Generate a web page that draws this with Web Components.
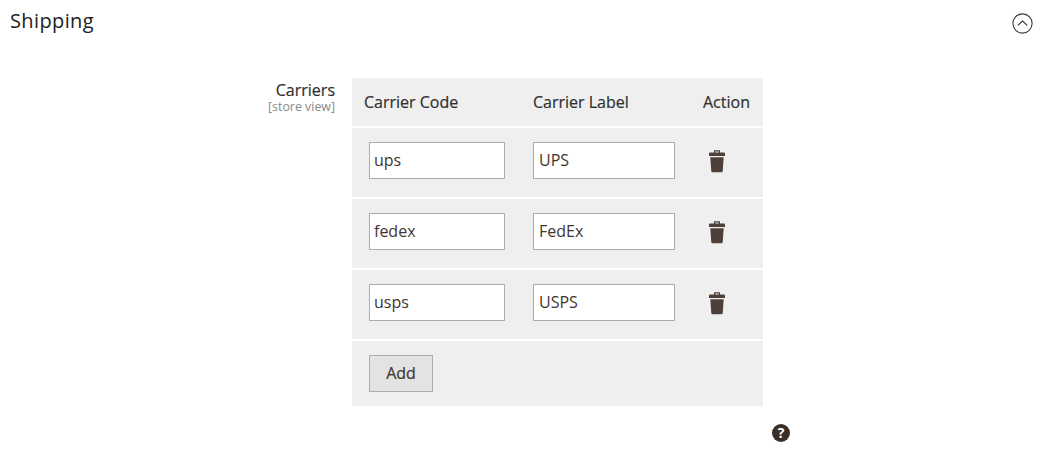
<!DOCTYPE html>
<html>
<head>
<meta charset="utf-8">
<title>Shipping</title>
<style>
html, body { margin: 0; background: #fff; }
body { font-family: "Open Sans", "Liberation Sans", sans-serif; color: #303030; }
</style>
</head>
<body>
<shipping-section title-text="Shipping">
  <carriers-field label="Carriers" scope="[store view]">
    <carrier-row code="ups" name="UPS"></carrier-row>
    <carrier-row code="fedex" name="FedEx"></carrier-row>
    <carrier-row code="usps" name="USPS"></carrier-row>
  </carriers-field>
</shipping-section>

<script>
const section_template = document.createElement('template');
section_template.innerHTML = `
<style>
:host {
  display: block;
  height: 462px;
  overflow: hidden;
}
header {
  display: flex;
  justify-content: space-between;
  align-items: flex-start;
  height: 78px;
  padding: 7px 16px 0 10px;
  box-sizing: border-box;
}
h2 {
  margin: 0;
  font-size: 20px;
  line-height: 28px;
  font-weight: 500;
  letter-spacing: 0.38px;
  color: #222;
}
svg { display: block; margin-top: 6px; }
</style>
<header>
  <h2 id="title"></h2>
  <svg width="21" height="21" viewBox="0 0 21 21" fill="none" stroke="#3a3a3a">
    <circle cx="10.5" cy="10.5" r="9.6" stroke-width="1.1"/>
    <path d="M5.8 12.4 10.5 8l4.7 4.4" stroke-width="1.2"/>
  </svg>
</header>
<slot></slot>
`;
class ShippingSection extends HTMLElement {
  constructor() {
    super();
    this.attachShadow({ mode: 'open' });
    this.shadowRoot.appendChild(section_template.content.cloneNode(true));
    this.shadowRoot.querySelector('#title').textContent = this.getAttribute('title-text');
  }
}
customElements.define('shipping-section', ShippingSection);

const field_template = document.createElement('template');
field_template.innerHTML = `
<style>
:host {
  display: grid;
  grid-template-columns: 335px 411px 1fr;
  column-gap: 17px;
  row-gap: 18px;
}
.label {
  text-align: right;
  padding-top: 2px;
}
.name {
  font-size: 16px;
  line-height: 20px;
  font-weight: 500;
  -webkit-text-stroke: 0.2px #303030;
  color: #303030;
}
.scope {
  font-size: 12.4px;
  line-height: 14px;
  color: #8a8a8a;
}
.table {
  background: #efefef;
  width: 411px;
}
.head {
  display: grid;
  grid-template-columns: 181px 170px 60px;
  height: 47px;
  padding-bottom: 1px;
  align-items: center;
  font-size: 16px;
  font-weight: 500;
  -webkit-text-stroke: 0.2px #303030;
  color: #303030;
  border-bottom: 2px solid #fff;
}
.head span:first-child { padding-left: 12px; }
.foot {
  height: 65px;
  padding: 14px 0 0 17px;
  box-sizing: border-box;
}
button {
  display: block;
  width: 64px;
  height: 37px;
  background: #e3e3e3;
  border: 1px solid #adadad;
  padding: 0 0 2px;
  font: 500 16px "Open Sans", "Liberation Sans", sans-serif;
  -webkit-text-stroke: 0.2px #41362f;
  color: #41362f;
}
.help {
  grid-column: 2;
  justify-self: end;
  margin-right: -27px;
}
</style>
<div class="label">
  <div class="name" id="name"></div>
  <div class="scope" id="scope"></div>
</div>
<div class="table">
  <div class="head">
    <span>Carrier Code</span>
    <span>Carrier Label</span>
    <span>Action</span>
  </div>
  <slot></slot>
  <div class="foot"><button type="button">Add</button></div>
</div>
<span></span>
<help-icon class="help"></help-icon>
`;
class CarriersField extends HTMLElement {
  constructor() {
    super();
    this.attachShadow({ mode: 'open' });
    this.shadowRoot.appendChild(field_template.content.cloneNode(true));
    this.shadowRoot.querySelector('#name').textContent = this.getAttribute('label');
    this.shadowRoot.querySelector('#scope').textContent = this.getAttribute('scope');
  }
}

const row_template = document.createElement('template');
row_template.innerHTML = `
<style>
:host {
  display: grid;
  grid-template-columns: 181px 170px 60px;
  height: 71px;
  box-sizing: border-box;
  padding-top: 14px;
  border-bottom: 2px solid #fff;
}
input {
  display: block;
  box-sizing: border-box;
  height: 37px;
  border: 1px solid #adadad;
  border-radius: 0;
  background: #fff;
  outline: 0;
  padding: 0 4px 2px;
  font: 400 16px "Open Sans", "Liberation Sans", sans-serif;
  color: #41362f;
}
#code { width: 136px; margin-left: 17px; }
#name { width: 142px; padding-left: 5px; }
svg { display: block; margin: 7px 0 0 5px; }
</style>
<div><input id="code" type="text"></div>
<div><input id="name" type="text"></div>
<div>
  <svg width="18" height="24" viewBox="0 0 18 24" fill="#4d4039">
    <path d="M6 1.2h6v2.2h3.8c.7 0 1.2.5 1.2 1.2V7H1V4.6c0-.7.5-1.2 1.2-1.2H6zM7.3 2.4v1h3.4v-1z" fill-rule="evenodd"/>
    <path d="M2.3 8.2h13.4l-1 14c-.1.6-.5 1-1.1 1H4.4c-.6 0-1-.4-1.1-1z"/>
  </svg>
</div>
`;
class CarrierRow extends HTMLElement {
  constructor() {
    super();
    this.attachShadow({ mode: 'open' });
    this.shadowRoot.appendChild(row_template.content.cloneNode(true));
    this.shadowRoot.querySelector('#code').setAttribute('value', this.getAttribute('code'));
    this.shadowRoot.querySelector('#name').setAttribute('value', this.getAttribute('name'));
  }
}
customElements.define('carrier-row', CarrierRow);

const help_template = document.createElement('template');
help_template.innerHTML = `
<style>
:host {
  display: block;
  width: 18px;
  height: 18px;
  border-radius: 50%;
  background: #3a2f28;
}
span {
  display: block;
  text-align: center;
  font: 700 14px/18px "Open Sans", "Liberation Sans", sans-serif;
  color: #fff;
}
</style>
<span>?</span>
`;
class HelpIcon extends HTMLElement {
  constructor() {
    super();
    this.attachShadow({ mode: 'open' });
    this.shadowRoot.appendChild(help_template.content.cloneNode(true));
  }
}
customElements.define('help-icon', HelpIcon);
customElements.define('carriers-field', CarriersField);
</script>
</body>
</html>
